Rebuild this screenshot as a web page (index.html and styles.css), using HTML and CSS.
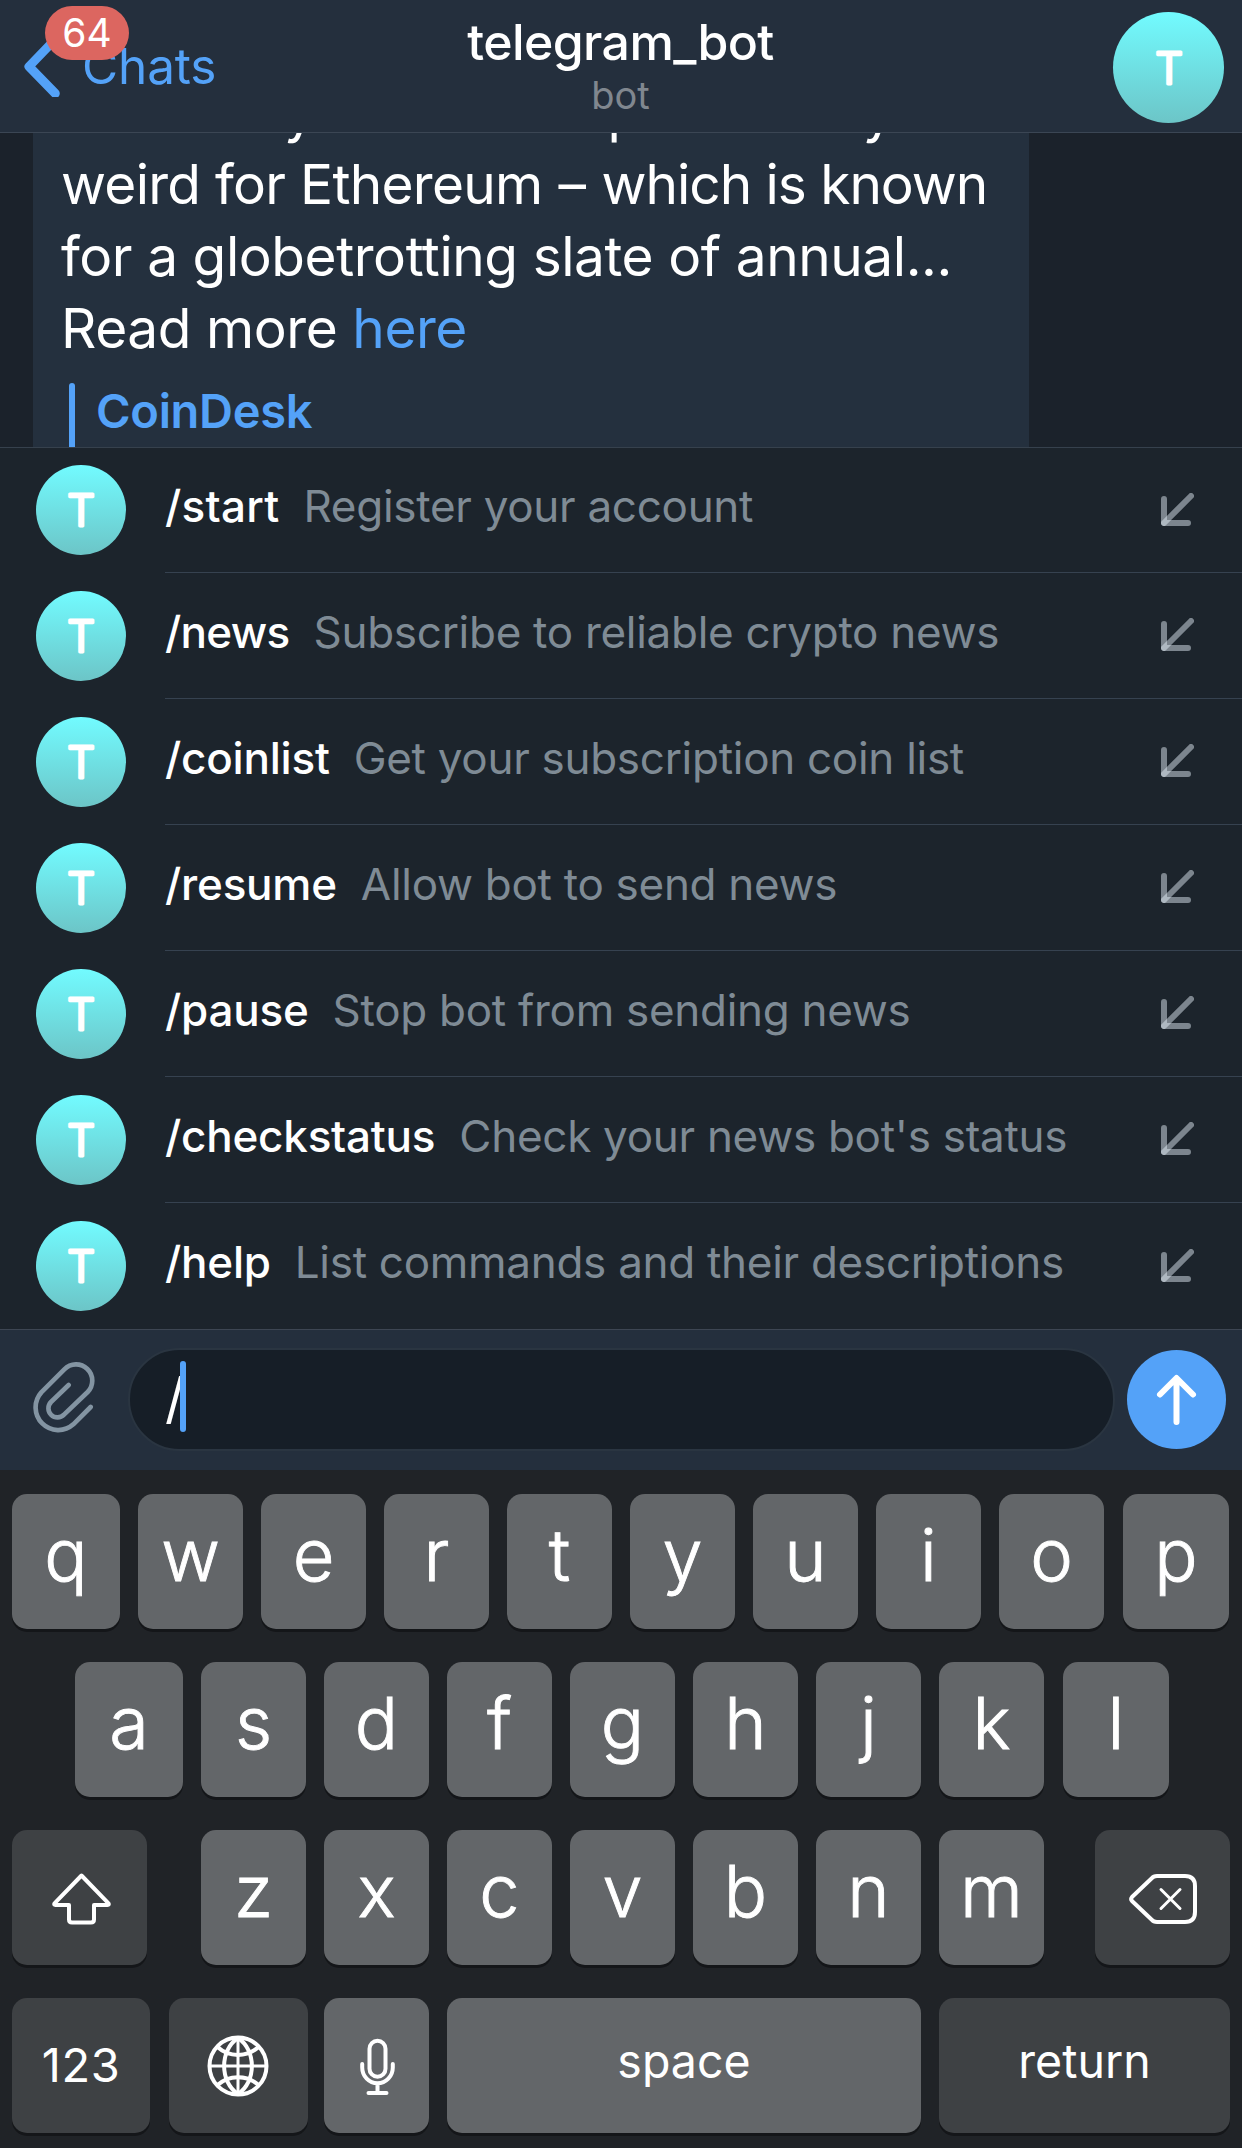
FILE: index.html
```
<!DOCTYPE html>
<html lang="en">
<head>
<meta charset="utf-8">
<title>telegram_bot</title>
<link rel="stylesheet" href="styles.css">
</head>
<body>
<svg class="defs" aria-hidden="true">
  <symbol id="initial" viewBox="0 0 40 48"><text class="initial-letter" x="20" y="40" text-anchor="middle">T</text></symbol>
  <symbol id="insert" viewBox="0 0 33 33"><path d="M3 6v24h24"/><path d="M3 30 30 3"/></symbol>
</svg>
<div class="screen">
  <header class="header">
    <a class="back">
      <svg class="back-icon" viewBox="24 35 36 62"><path d="M55.5 39 29 66.5l26.3 27"/></svg>
      <span class="back-label">Chats</span>
      <span class="badge">64</span>
    </a>
    <div class="heading">
      <h1 class="title">telegram_bot</h1>
      <p class="subtitle">bot</p>
    </div>
    <div class="avatar avatar-large"><svg class="initial"><use href="#initial"/></svg></div>
  </header>

  <main class="chat">
    <article class="bubble">
      <p class="line cut"><span class="c1">y</span><span class="c2">p</span><span class="c3">y</span></p>
      <p class="line"><span class="snug">weird for Ethereum</span><span class="dash">–</span><span class="snugger">which is known</span></p>
      <p class="line">for a globetrotting slate of annual...</p>
      <p class="line">Read more <a class="link">here</a></p>
      <div class="quote"><span class="quote-bar"></span><span class="quote-title">CoinDesk</span></div>
    </article>
  </main>

  <ul class="commands">
    <li class="command"><div class="avatar"><svg class="initial"><use href="#initial"/></svg></div><div class="entry"><p class="entry-text"><b class="name loose">/start</b><span class="desc">Register your account</span></p><svg class="insert"><use href="#insert"/></svg></div></li>
    <li class="command"><div class="avatar"><svg class="initial"><use href="#initial"/></svg></div><div class="entry"><p class="entry-text"><b class="name tight">/news</b><span class="desc">Subscribe to reliable crypto news</span></p><svg class="insert"><use href="#insert"/></svg></div></li>
    <li class="command"><div class="avatar"><svg class="initial"><use href="#initial"/></svg></div><div class="entry"><p class="entry-text"><b class="name">/coinlist</b><span class="desc">Get your subscription coin list</span></p><svg class="insert"><use href="#insert"/></svg></div></li>
    <li class="command"><div class="avatar"><svg class="initial"><use href="#initial"/></svg></div><div class="entry"><p class="entry-text"><b class="name">/resume</b><span class="desc">Allow bot to send news</span></p><svg class="insert"><use href="#insert"/></svg></div></li>
    <li class="command"><div class="avatar"><svg class="initial"><use href="#initial"/></svg></div><div class="entry"><p class="entry-text"><b class="name">/pause</b><span class="desc">Stop bot from sending news</span></p><svg class="insert"><use href="#insert"/></svg></div></li>
    <li class="command"><div class="avatar"><svg class="initial"><use href="#initial"/></svg></div><div class="entry"><p class="entry-text"><b class="name">/checkstatus</b><span class="desc">Check your news bot's status</span></p><svg class="insert"><use href="#insert"/></svg></div></li>
    <li class="command"><div class="avatar"><svg class="initial"><use href="#initial"/></svg></div><div class="entry"><p class="entry-text"><b class="name">/help</b><span class="desc">List commands and their descriptions</span></p><svg class="insert"><use href="#insert"/></svg></div></li>
  </ul>

  <div class="composer">
    <svg class="clip" viewBox="96 186 192 216"><path d="M272 321 220 373A68 68 0 0 1 124 277L193 208A48 48 0 0 1 263 276L192 344A27 27 0 0 1 153 306L206 255"/></svg>
    <div class="input"><span class="typed">/</span><span class="caret"></span></div>
    <div class="send"><svg viewBox="0 0 99 99"><path d="M49.5 29v43M33 44.500 49.500 28 66 44.500"/></svg></div>
  </div>

  <div class="keyboard">
    <div class="keys row-1"><span class="key">q</span><span class="key">w</span><span class="key">e</span><span class="key">r</span><span class="key">t</span><span class="key">y</span><span class="key">u</span><span class="key">i</span><span class="key">o</span><span class="key">p</span></div>
    <div class="keys row-2"><span class="key">a</span><span class="key">s</span><span class="key">d</span><span class="key">f</span><span class="key">g</span><span class="key">h</span><span class="key">j</span><span class="key">k</span><span class="key">l</span></div>
    <div class="keys row-3">
      <span class="key dark shift"><svg viewBox="0 0 135 135"><path d="M69.500 45.500 42.500 73.300Q41.500 75 43.500 75H57V89.500Q57 92.500 60 92.500H79Q82 92.500 82 89.500V75H95.500Q97.500 75 96.500 73.300Z"/></svg></span>
      <span class="key">z</span><span class="key">x</span><span class="key">c</span><span class="key">v</span><span class="key">b</span><span class="key">n</span><span class="key">m</span>
      <span class="key dark delete"><svg viewBox="0 0 135 135"><path d="M62 46H90Q100 46 100 56V82Q100 92 90 92H62Q58.500 92 56.500 89.500L37 71Q35.300 69 37 67L56.500 48.500Q58.500 46 62 46Z"/><path class="thin" d="M66 59.500 85 78.500M85 59.500 66 78.500"/></svg></span>
    </div>
    <div class="keys row-4">
      <span class="key dark digits">123</span>
      <span class="key dark globe"><svg viewBox="0 0 139 135"><circle cx="69" cy="68" r="28.500"/><path class="thin" d="M69 40V96M41 68H97"/><path d="M69 40C50.500 52 50.500 84 69 96C87.500 84 87.500 52 69 40M48.500 49C60 59.500 78 59.500 89.500 49M48.500 87C60 76.500 78 76.500 89.500 87"/></svg></span>
      <span class="key mic"><svg viewBox="0 0 105 135"><rect x="45.500" y="42.800" width="16" height="36" rx="8"/><path d="M38.200 66V69.500A15.300 15.800 0 0 0 68.800 69.500V66M53.500 86V93M44.500 95H62.500"/></svg></span>
      <span class="key space">space</span>
      <span class="key dark return">return</span>
    </div>
  </div>
</div>
</body>
</html>
```
FILE: styles.css
```
* { box-sizing: border-box; margin: 0; padding: 0; }

body {
  background: #202327;
  color: #fff;
  font-family: Inter, "Liberation Sans", sans-serif;
}

svg { display: block; fill: none; stroke-linecap: round; stroke-linejoin: round; }
.defs { position: absolute; width: 0; height: 0; }
.screen { width: 1242px; height: 2148px; overflow: hidden; }

/* Header */
.header {
  display: grid;
  grid-template-columns: 1fr auto 1fr;
  height: 133px;
  padding: 0 18px 0 24px;
  background: #242f3d;
  border-bottom: 1px solid #3b4654;
}
.back { position: relative; display: flex; align-items: center; gap: 22px; color: #54a2f8; }
.back-icon { width: 36px; height: 62px; stroke: #54a2f8; stroke-width: 9; }
.back-label { font-size: 49.5px; line-height: 60px; letter-spacing: -.003em; }
.badge {
  position: absolute;
  left: 21px;
  top: 6px;
  width: 84px;
  height: 54px;
  border-radius: 27px;
  background: #dc6660;
  color: #fff;
  font-size: 39px;
  line-height: 54px;
  text-align: center;
}
.heading { padding: 12px 7px 0 0; text-align: center; }
.title { font-size: 50px; font-weight: 500; line-height: 60px; letter-spacing: -.012em; }
.subtitle { font-size: 38px; line-height: 46px; color: #80878f; }

.avatar {
  flex: none;
  display: flex;
  align-items: center;
  justify-content: center;
  width: 90px;
  height: 90px;
  border-radius: 50%;
  background: linear-gradient(#72fbff, #6cc5c7);
}
.avatar-large { justify-self: end; width: 111px; height: 111px; margin-top: 12px; }
.initial { width: 40px; height: 48px; }
.initial-letter {
  font: 300 43.6px Inter, sans-serif;
  fill: #fff;
  stroke: #fff;
  stroke-width: 3px;
}

/* Conversation */
.chat { height: 315px; padding-left: 33px; overflow: hidden; background: #1b222b; border-bottom: 1px solid #36414d; }
.bubble { width: 996px; height: 400px; margin-top: -57px; padding-left: 28px; background: #24303e; }
.line { display: flex; height: 72px; font-size: 55px; line-height: 72px; letter-spacing: -.008em; white-space: pre; }
.cut .c1 { margin-left: 223px; }
.cut .c2 { margin-left: 293px; }
.cut .c3 { margin-left: 222px; }
.snug { letter-spacing: -.013em; }
.snugger { letter-spacing: -.019em; }
.dash { width: 29px; margin: 0 15px; display: flex; justify-content: center; }
.link { color: #54a2f8; }
.quote { display: flex; gap: 21px; margin: 19px 0 0 8px; color: #54a2f8; }
.quote-bar { width: 6px; height: 120px; border-radius: 3px; background: #54a2f8; }
.quote-title { font-size: 47px; font-weight: 600; line-height: 56px; letter-spacing: -.0066em; }

/* Command list */
.commands { height: 882px; margin-top: -1px; background: #1c242c; list-style: none; border-top: 1px solid #36414d; }
.command { display: flex; align-items: center; gap: 39px; height: 126px; padding-left: 36px; }
.command:first-child { height: 125px; }
.command:first-child .avatar { margin-bottom: 1px; }
.command .initial { margin: 0 1px 1px 0; }
.entry {
  flex: 1;
  display: flex;
  align-items: center;
  justify-content: space-between;
  height: 100%;
  padding-right: 48px;
  border-bottom: 1px solid #364250;
}
.command:last-child .entry { border-bottom: 0; }
.entry-text { margin-bottom: 8px; font-size: 44px; line-height: 52px; white-space: nowrap; }
.name { font-weight: 500; letter-spacing: -.005em; }
.loose { letter-spacing: .006em; }
.tight { letter-spacing: -.016em; }
.desc { margin-left: 24px; color: #7f8b95; letter-spacing: -.0065em; }
.insert { width: 33px; height: 33px; margin-bottom: 2px; stroke: rgba(230, 240, 248, .48); stroke-width: 6; }

/* Composer */
.composer {
  display: flex;
  align-items: center;
  height: 141px;
  padding: 0 0 1px 32px;
  background: #242f3d;
  border-top: 1px solid #3d4653;
}
.clip { width: 64px; height: 72px; margin-bottom: 3px; stroke: #8394a2; stroke-width: 14; }
.input {
  display: flex;
  align-items: center;
  width: 987px;
  height: 103px;
  margin: 0 12px 0 32px;
  padding-left: 35px;
  border: 2px solid #2a3541;
  border-radius: 52px;
  background: #161e27;
}
.typed { width: 15px; margin-bottom: 3px; font-size: 55px; line-height: 72px; }
.caret { z-index: 1; width: 6px; height: 71px; margin-bottom: 6px; border-radius: 3px; background: #54a2f8; }
.send { width: 99px; height: 99px; border-radius: 50%; background: #54a2f8; stroke: #fff; stroke-width: 6; }

/* Keyboard */
.keyboard { display: flex; flex-direction: column; gap: 33px; height: 678px; padding-top: 24px; background: #202327; }
.keys { display: flex; gap: 18px; padding-left: 12px; }
.key {
  width: 105px;
  height: 135px;
  border-radius: 15px;
  background: #636669;
  box-shadow: 0 3px 0 #141619;
  font-size: 72px;
  font-weight: 300;
  line-height: 121px;
  text-align: center;
  -webkit-text-stroke: .9px #fff;
  stroke: #fff;
  stroke-width: 4;
}
.key svg { height: 135px; width: 100%; }
.dark { background: #3e4144; }
.thin { stroke-width: 3; }
.row-1 .key:first-child, .row-2 .key:first-child { width: 108px; }
.row-1 .key:last-child, .row-2 .key:last-child { width: 106px; margin-left: 1px; }
.row-2 { padding-left: 75px; }
.shift { width: 135px; margin-right: 36px; }
.delete { width: 135px; margin-left: 33px; }
.digits, .space, .return { font-weight: 400; -webkit-text-stroke: 0; }
.digits { width: 138px; font-size: 47px; line-height: 134px; letter-spacing: .013em; }
.globe { width: 139px; margin: 0 -2px 0 1px; }
.space, .return { font-size: 46.5px; line-height: 126px; }
.space { width: 474px; }
.return { width: 291px; }
```
